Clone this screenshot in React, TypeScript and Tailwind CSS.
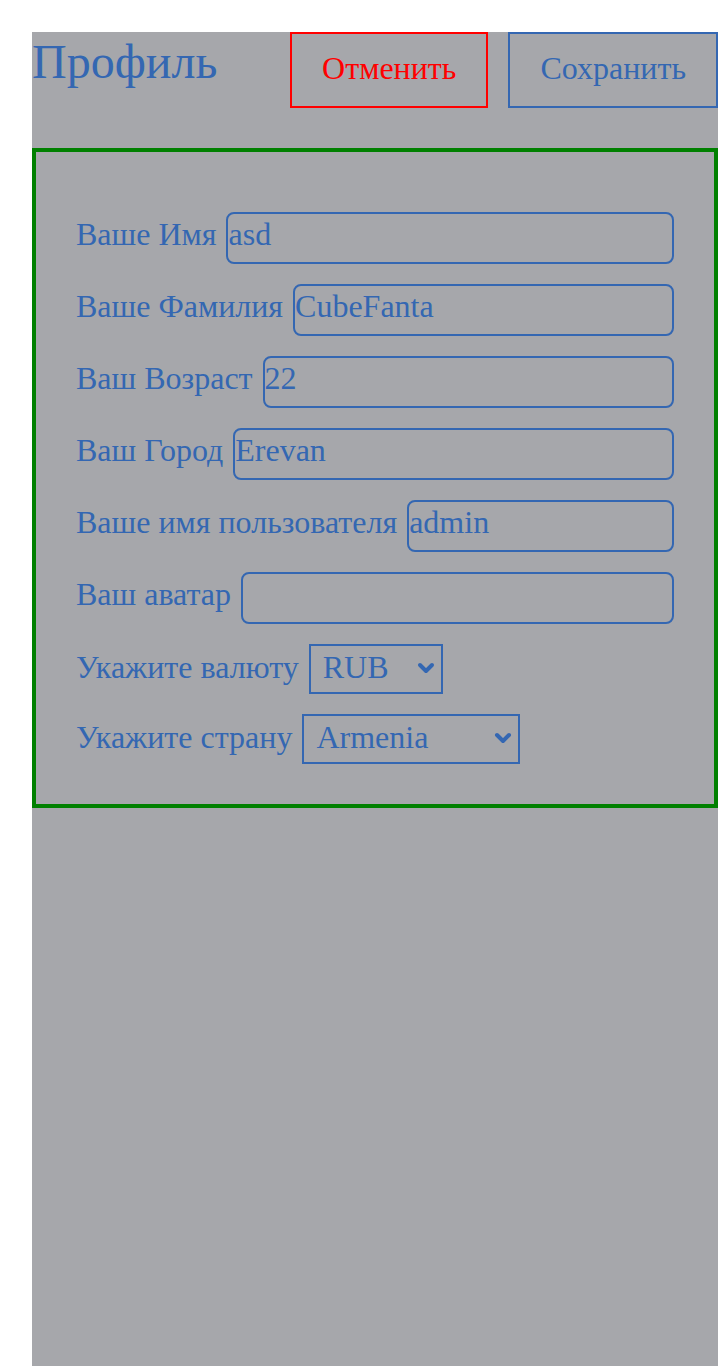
import { useState } from 'react';

const fields = [
  { label: 'Ваше Имя', value: 'asd' },
  { label: 'Ваше Фамилия', value: 'CubeFanta' },
  { label: 'Ваш Возраст', value: '22' },
  { label: 'Ваш Город', value: 'Erevan' },
  { label: 'Ваше имя пользователя', value: 'admin' },
  { label: 'Ваш аватар', value: '' },
];

const currencies = ['RUB', 'USD', 'EUR'];
const countries = ['Armenia', 'Russia', 'Kazakhstan', 'Belarus'];

interface ISelectProps {
  label: string;
  value: string;
  options: string[];
  width: string;
  onChange: (v: string) => void;
}

const SelectRow = ({ label, value, options, width, onChange }: ISelectProps) => (
  <div className="flex items-start gap-[10px] text-[32px]">
    <label className="whitespace-nowrap leading-[46px]">{label}</label>
    <div className={`relative ${width}`}>
      <select
        value={value}
        onChange={(e) => onChange(e.target.value)}
        className="block h-[50px] w-full appearance-none border-2 border-[#3467b2] pb-[5px] pl-[12px] leading-[normal] outline-none"
      >
        {options.map((o) => (
          <option key={o}>{o}</option>
        ))}
      </select>
      {/* chevron */}
      <svg
        className="pointer-events-none absolute right-[8px] top-[18px] h-[12px] w-[18px]"
        viewBox="0 0 18 12"
        fill="none"
        stroke="#3467b2"
        strokeWidth="4"
        strokeLinecap="round"
        strokeLinejoin="round"
      >
        <path d="M3 3l6 6 6-6" />
      </svg>
    </div>
  </div>
);

const App = () => {
  const [form, setForm] = useState(fields.map((f) => f.value));
  const [currency, setCurrency] = useState('RUB');
  const [country, setCountry] = useState('Armenia');

  return (
    <div className="min-h-screen bg-white pl-8 pt-8 font-['Liberation_Serif',serif] text-[#3467b2]">
      <div className="min-h-[1334px] bg-[#a6a7ab]">
        {/* header */}
        <div className="flex items-start justify-between">
          <h1 className="text-[48px] leading-[60px]">Профиль</h1>
          <div className="flex gap-5">
            <button className="h-[76px] border-2 border-[#ff0000] px-[30px] pb-[4px] text-[32px] text-[#ff0000]">
              Отменить
            </button>
            <button className="h-[76px] border-2 border-[#3467b2] px-[30px] pb-[4px] text-[32px]">
              Сохранить
            </button>
          </div>
        </div>
        {/* card */}
        <div className="mt-10 flex flex-col gap-5 border-4 border-[#008000] px-10 pb-10 pt-[60px]">
          {fields.map((f, i) => (
            <div key={f.label} className="flex items-start gap-[10px] text-[32px]">
              <label className="whitespace-nowrap leading-[44px]">{f.label}</label>
              <input
                value={form[i]}
                onChange={(e) =>
                  setForm(form.map((v, j) => (j === i ? e.target.value : v)))
                }
                className="h-[52px] min-w-0 flex-1 rounded-lg border-2 border-[#3467b2] pb-[7px] leading-[normal] outline-none"
              />
            </div>
          ))}
          <SelectRow
            label="Укажите валюту"
            value={currency}
            options={currencies}
            width="w-[134px]"
            onChange={setCurrency}
          />
          <SelectRow
            label="Укажите страну"
            value={country}
            options={countries}
            width="w-[218px]"
            onChange={setCountry}
          />
        </div>
      </div>
    </div>
  );
};

export default App;
